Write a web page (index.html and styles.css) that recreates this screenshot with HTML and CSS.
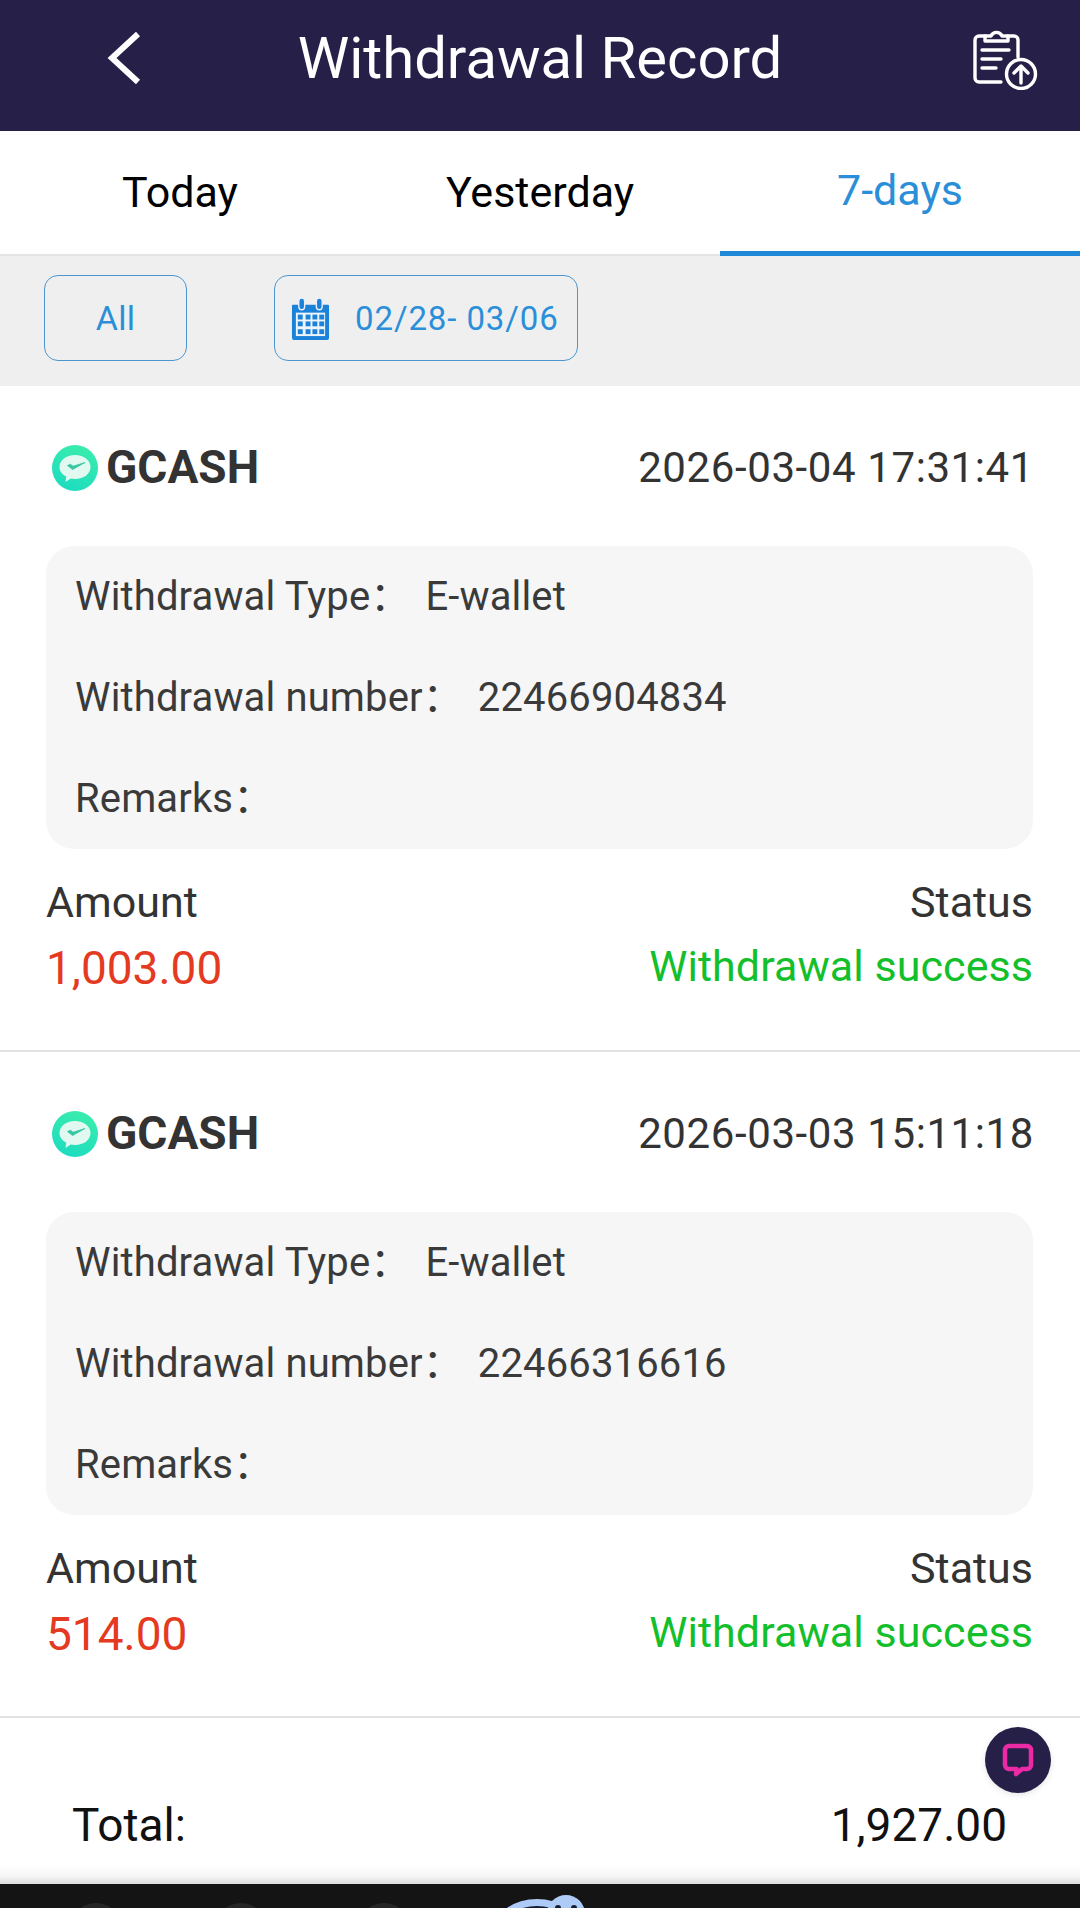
FILE: index.html
```html
<!DOCTYPE html>
<html lang="en">
<head>
<meta charset="utf-8">
<title>Withdrawal Record</title>
<link rel="stylesheet" href="styles.css">
</head>
<body>
<div class="page">
  <header class="topbar">
    <svg class="back" viewBox="0 0 36 54" width="36" height="54"><path d="M32 3 L6 27 L32 51" fill="none" stroke="#fff" stroke-width="6"/></svg>
    <h1 class="title">Withdrawal Record</h1>
    <svg class="clip" viewBox="0 0 66 62" width="66" height="62" fill="none" stroke="#fff" stroke-width="3.4" stroke-linecap="round" stroke-linejoin="round"><path d="M13 8H7a4 4 0 0 0-4 4v38a4 4 0 0 0 4 4h22M36 8h6a4 4 0 0 1 4 4v17"/><path d="M13 13V8h6a6 6 0 0 1 11 0h6v5z"/><path d="M10 22H37M10 31H29M10 40H24"/><circle cx="49" cy="46" r="14.5"/><path d="M49 55V38M42 45l7-7 7 7"/></svg>
  </header>
  <nav class="tabs">
    <div class="tab">Today</div>
    <div class="tab">Yesterday</div>
    <div class="tab tab-active">7-days</div>
  </nav>
  <div class="filters">
    <div class="btn btn-all">All</div>
    <div class="btn btn-date">
      <svg viewBox="0 0 40 44" width="39" height="43"><path d="M2 8h36a1 1 0 0 1 1 1v33a2 2 0 0 1-2 2H3a2 2 0 0 1-2-2V9a1 1 0 0 1 1-1z" fill="#1a82d8"/><rect x="5" y="16" width="30" height="24" fill="#eef4fa"/><rect x="8" y="1" width="6" height="12" rx="3" fill="#1a82d8" stroke="#eef" stroke-width="1.4"/><rect x="26" y="1" width="6" height="12" rx="3" fill="#1a82d8" stroke="#eef" stroke-width="1.4"/><g fill="#1a82d8"><rect x="7" y="18" width="5" height="5"/><rect x="15" y="18" width="5" height="5"/><rect x="22" y="18" width="5" height="5"/><rect x="29" y="18" width="5" height="5"/><rect x="7" y="25" width="5" height="5"/><rect x="15" y="25" width="5" height="5"/><rect x="22" y="25" width="5" height="5"/><rect x="29" y="25" width="5" height="5"/><rect x="7" y="33" width="5" height="5"/><rect x="15" y="33" width="5" height="5"/><rect x="22" y="33" width="5" height="5"/><rect x="29" y="33" width="5" height="5"/></g></svg>
      <span>02/28- 03/06</span>
    </div>
  </div>

  <section class="card">
    <div class="card-head">
      <div class="brand">
        <svg class="logo" viewBox="0 0 46 46" width="46" height="46"><defs><linearGradient id="g1" x1="0.7" y1="0" x2="0.3" y2="1"><stop offset="0" stop-color="#3bedac"/><stop offset="1" stop-color="#1cdcc0"/></linearGradient></defs><circle cx="23" cy="23" r="23" fill="url(#g1)"/><path d="M23 10c8.800 0 15.500 5 15.500 12S31.800 34 23 34c-1.500 0-2.900-.1-4.200-.4L13.500 37l.7-5.400C10 29.400 7.500 26 7.500 22 7.500 15 14.200 10 23 10z" fill="#e2f9f1"/><path d="M15.500 20.500l5 4L33 17.500l-12 3.800-2.500-2z" fill="#33c79f" stroke="#33c79f" stroke-width=".8" stroke-linejoin="round"/></svg>
        <span class="brand-name">GCASH</span>
      </div>
      <div class="time">2026-03-04 17:31:41</div>
    </div>
    <div class="details">
      <div class="row"><span class="label">Withdrawal Type：</span><span>E-wallet</span></div>
      <div class="row"><span class="label">Withdrawal number：</span><span>22466904834</span></div>
      <div class="row"><span class="label">Remarks：</span></div>
    </div>
    <div class="foot">
      <div class="col"><div class="cap">Amount</div><div class="amount">1,003.00</div></div>
      <div class="col col-r"><div class="cap">Status</div><div class="status">Withdrawal success</div></div>
    </div>
  </section>

  <section class="card">
    <div class="card-head">
      <div class="brand">
        <svg class="logo" viewBox="0 0 46 46" width="46" height="46"><circle cx="23" cy="23" r="23" fill="url(#g1)"/><path d="M23 10c8.800 0 15.500 5 15.500 12S31.800 34 23 34c-1.500 0-2.900-.1-4.200-.4L13.500 37l.7-5.400C10 29.400 7.500 26 7.500 22 7.500 15 14.200 10 23 10z" fill="#e2f9f1"/><path d="M15.500 20.500l5 4L33 17.500l-12 3.800-2.500-2z" fill="#33c79f" stroke="#33c79f" stroke-width=".8" stroke-linejoin="round"/></svg>
        <span class="brand-name">GCASH</span>
      </div>
      <div class="time">2026-03-03 15:11:18</div>
    </div>
    <div class="details">
      <div class="row"><span class="label">Withdrawal Type：</span><span>E-wallet</span></div>
      <div class="row"><span class="label">Withdrawal number：</span><span>22466316616</span></div>
      <div class="row"><span class="label">Remarks：</span></div>
    </div>
    <div class="foot">
      <div class="col"><div class="cap">Amount</div><div class="amount">514.00</div></div>
      <div class="col col-r"><div class="cap">Status</div><div class="status">Withdrawal success</div></div>
    </div>
  </section>

  <div class="total"><span>Total:</span><span>1,927.00</span></div>
  <div class="navbar"><i class="dot"></i><i class="dot"></i><i class="dot"></i><i class="ring"></i><i class="bubble"></i></div>

  <div class="chat">
    <svg viewBox="0 0 32 34" width="32" height="34" fill="none"><path d="M7 3h18a4 4 0 0 1 4 4v15a4 4 0 0 1-4 4h-5l-6 5 .5-5H7a4 4 0 0 1-4-4V7a4 4 0 0 1 4-4z" stroke="#ec2aa6" stroke-width="4.500" stroke-linejoin="round"/></svg>
  </div>
</div>
</body>
</html>
```
FILE: styles.css
```css
* { box-sizing: border-box; }
html, body { margin: 0; padding: 0; }
body { font-family: Roboto, "Noto Sans CJK SC", "Noto Sans", sans-serif; background: #fff; }
.page { width: 1080px; height: 1908px; position: relative; overflow: hidden; display: flex; flex-direction: column; }

.topbar { height: 131px; background: #261f47; display: grid; grid-template-columns: 1fr auto 1fr; align-items: center; padding: 0 42px 16px; flex: none; }
.title { margin: 0; font-size: 58px; font-weight: 400; color: #fff; line-height: 1; }
.back, .clip { display: block; }
.back { margin-left: 64px; }
.clip { margin-top: 2px; justify-self: end; }

.tabs { height: 125px; display: grid; grid-template-columns: repeat(3, 1fr); border-bottom: 2px solid #e4e4e4; flex: none; }
.tab { display: flex; align-items: center; justify-content: center; font-size: 43px; color: #000; padding-bottom: 2px; }
.tab-active { color: #2a8fd8; border-bottom: 5px solid #2088d8; margin-bottom: -2px; padding-bottom: 2px; }

.filters { height: 130px; background: #efeff0; display: flex; align-items: flex-start; gap: 87px; padding: 19px 0 0 44px; flex: none; }
.btn { height: 86px; border: 1.5px solid #4a97cf; border-radius: 14px; color: #2a8fd8; font-size: 33px; display: flex; align-items: center; letter-spacing: .2px; }
.btn-all { width: 143px; justify-content: center; font-size: 34px; }
.btn-date { width: 304px; gap: 25px; padding-left: 16px; letter-spacing: .9px; }

.card { height: 666px; padding: 51px 47px 0 46px; border-bottom: 2px solid #e2e2e2; flex: none; }
.card-head { display: flex; justify-content: space-between; align-items: center; height: 60px; }
.brand { display: flex; align-items: center; gap: 8px; padding-left: 6px; }
.logo { display: block; margin-top: 2px; }
.brand-name { font-size: 46px; font-weight: 700; color: #333; line-height: 58px; }
.time { font-size: 42px; color: #333; letter-spacing: .6px; margin-right: -1px; padding-top: 1px; }
.details { margin-top: 49px; height: 303px; background: #f6f6f7; border-radius: 28px; padding: 0 29px; display: flex; flex-direction: column; justify-content: center; }
.row { height: 101px; line-height: 101px; font-size: 40px; color: #3a3a3a; display: flex; align-items: baseline; letter-spacing: .14px; }
.label { margin-right: 15px; }
.foot { display: flex; justify-content: space-between; margin-top: 24px; }
.col-r { text-align: right; }
.cap { font-size: 43px; color: #333; line-height: 58px; }
.amount { font-size: 46px; color: #e53a22; line-height: 74px; }
.status { font-size: 43px; color: #13bf2b; line-height: 70px; letter-spacing: .06px; }

.total { height: 166px; display: flex; justify-content: space-between; align-items: center; padding: 48px 73px 0 72px; font-size: 46px; color: #111; flex: none; background: linear-gradient(to bottom, #fff 146px, #f6f6f6 158px, #dcdcdc 166px); }
.navbar { height: 25px; background: #141414; flex: none; position: relative; overflow: hidden; }
.dot { position: absolute; top: 19px; width: 52px; height: 52px; border-radius: 50%; background: #262626; }
.dot:nth-child(1) { left: 70px; }
.dot:nth-child(2) { left: 215px; }
.dot:nth-child(3) { left: 358px; }
.ring { position: absolute; left: 495px; top: 15px; width: 84px; height: 60px; border-radius: 50%; border: 7px solid #aecbf7; background: #141e30; }
.bubble { position: absolute; left: 547px; top: 11px; width: 38px; height: 38px; border-radius: 50%; background: #aecbf7; }
.bubble::before, .bubble::after { content: ""; position: absolute; top: 10px; width: 6px; height: 6px; border-radius: 50%; background: #141e30; }
.bubble::before { left: 8px; }
.bubble::after { right: 8px; }

.chat { position: absolute; left: 985px; top: 1727px; width: 66px; height: 66px; border-radius: 50%; background: #261f47; display: flex; align-items: center; justify-content: center; box-shadow: 0 2px 6px rgba(0,0,0,.1); }
```
